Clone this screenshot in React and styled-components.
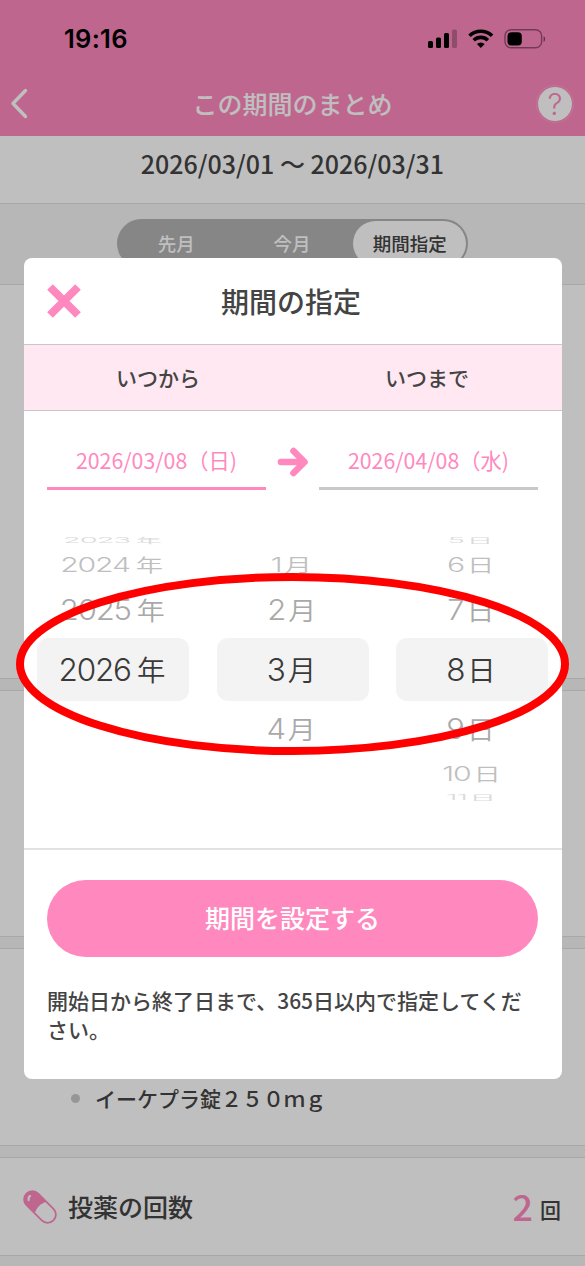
import styled, { createGlobalStyle } from 'styled-components';

const GlobalStyle = createGlobalStyle`
  * {
    box-sizing: border-box;
  }
  body {
    margin: 0;
    background: #fff;
    color: #444;
    font-family: 'Noto Sans CJK JP', sans-serif;
    font-weight: 500;
  }
`;

const Screen = styled.div`
  position: relative;
  display: flex;
  flex-direction: column;
  width: 585px;
  height: 1266px;
  overflow: hidden;
`;

const Top = styled.header`
  flex: none;
  height: 136px;
  background: #ff89bf;
`;

const StatusBar = styled.div`
  display: flex;
  justify-content: space-between;
  align-items: center;
  height: 76px;
  padding: 2px 38px 0 64px;
`;

const Clock = styled.span`
  padding-bottom: 1px;
  font-family: Inter, sans-serif;
  font-size: 25.5px;
  font-weight: 560;
  letter-spacing: 0.3px;
  color: #000;
`;

const NavBar = styled.div`
  display: grid;
  grid-template-columns: 60px 1fr 60px;
  align-items: center;
  height: 56px;
`;

const NavTitle = styled.h1`
  margin: 0;
  padding-bottom: 2px;
  text-align: center;
  font-size: 25px;
  font-weight: 500;
  line-height: 36px;
  color: #fff;
`;

const Help = styled.span`
  justify-self: end;
  display: flex;
  justify-content: center;
  align-items: center;
  width: 34px;
  height: 34px;
  margin-right: 13px;
  border-radius: 50%;
  background: #fff;
  box-shadow: 0 0 0 1px #ff89bf, 0 0 0 2px #ff9dca;
  font-family: Inter, sans-serif;
  font-size: 30px;
  font-weight: 300;
  line-height: 32px;
  color: #ff89bf;
`;

const Period = styled.div`
  flex: none;
  height: 67px;
  padding-top: 9px;
  text-align: center;
  font-size: 25px;
  line-height: 36px;
`;

const TabArea = styled.div`
  display: flex;
  flex: none;
  justify-content: center;
  height: 82px;
  padding-top: 15px;
  background: #f5f5f5;
  border: solid #e0e0e0;
  border-width: 1px 0;
`;

const Segment = styled.div`
  display: grid;
  grid-template-columns: repeat(3, 1fr);
  width: 351px;
  height: 49px;
  padding: 2px;
  border-radius: 25px;
  background: #b3b3b3;
`;

const Tab = styled.span`
  display: flex;
  justify-content: center;
  align-items: center;
  margin-left: ${(p) => (p.$active ? '3px' : '-1px')};
  padding-bottom: 1px;
  border-radius: 23px;
  font-size: 18.5px;
  color: ${(p) => (p.$active ? '#444' : '#fff')};
  background: ${(p) => (p.$active ? '#fff' : 'transparent')};
`;

const Block = styled.section`
  flex: none;
  height: ${(p) => p.$height}px;
`;

const Gap = styled.div`
  flex: none;
  height: 13px;
  background: #f5f5f5;
  border: solid #e0e0e0;
  border-width: 1px 0;
`;

const MedicineBlock = styled(Block)`
  display: flex;
  align-items: flex-end;
  padding: 0 0 31px 71px;
`;

const Medicine = styled.div`
  display: flex;
  align-items: center;
  gap: 15px;
  font-size: 21px;
  line-height: 32px;

  &::before {
    content: '';
    width: 9px;
    height: 9px;
    border-radius: 50%;
    background: #c8c8c8;
  }
`;

const CountRow = styled(Block)`
  display: flex;
  align-items: center;
  padding: 0 24px 0 23px;
`;

const CountLabel = styled.span`
  flex: 1;
  margin-left: 11px;
  padding-bottom: 2px;
  font-size: 25px;
`;

const Count = styled.span`
  display: flex;
  align-items: flex-end;
  gap: 7px;
  padding-bottom: 4px;
  font-size: 21px;
  line-height: 42px;

  strong {
    font-size: 36px;
    font-weight: 500;
    line-height: 50px;
    color: #ff89bf;
  }
`;

const Backdrop = styled.div`
  position: absolute;
  inset: 0;
  padding: 257.5px 23.5px 0;
  background: rgba(0, 0, 0, 0.25);
`;

const Modal = styled.div`
  display: flex;
  flex-direction: column;
  height: 821.5px;
  border-radius: 8px;
  background: #fff;
  overflow: hidden;
`;

const ModalHeader = styled.div`
  display: grid;
  grid-template-columns: 80px 1fr 80px;
  align-items: center;
  height: 86.5px;

  svg {
    margin-left: 23px;
  }
`;

const ModalTitle = styled.h2`
  margin: 0;
  padding: 0 3px 0 0;
  text-align: center;
  font-size: 28px;
  font-weight: 500;
  line-height: 40px;
`;

const Labels = styled.div`
  display: grid;
  grid-template-columns: 1fr 1fr;
  align-items: center;
  height: 67px;
  padding-bottom: 2px;
  border: solid #c8c8c8;
  border-width: 1px 0;
  background: #ffe8f2;
  text-align: center;
  font-size: 21px;
`;

const Dates = styled.div`
  display: flex;
  justify-content: space-between;
  height: 79px;
  padding: 0 23.5px;
`;

const DateField = styled.div`
  width: 219px;
  padding-top: 31px;
  border-bottom: 3px solid ${(p) => (p.$active ? '#ff89bf' : '#c8c8c8')};
  text-align: center;
  font-size: 21.3px;
  font-weight: 400;
  line-height: 36px;
  color: #ff89bf;
`;

const ArrowBox = styled.span`
  padding-top: 36px;
`;

const Picker = styled.div`
  display: grid;
  grid-template-columns: repeat(3, 152px);
  justify-content: space-between;
  height: 358px;
  padding: 44px 13.5px 0;
`;

const Wheel = styled.div`
  display: grid;
  grid-template-rows: 12px 36px 56px 63px 55px 35px 13px;
`;

const rowLooks = {
  0: { color: '#3a3a3a', scale: '1, 1' },
  1: { color: '#a9a9a9', scale: '0.985, 0.89' },
  2: { color: '#bfbfbf', scale: '0.96, 0.63' },
  3: { color: '#dadada', scale: '0.925, 0.24' },
};

const WheelRow = styled.div`
  display: flex;
  justify-content: center;
  align-items: center;
  padding: 0 2px ${(p) => (p.$distance > 1 ? 0 : 1)}px 0;
  border-radius: 11px;
  background: ${(p) => (p.$distance === 0 ? '#f3f3f3' : 'transparent')};
  color: ${(p) => rowLooks[p.$distance].color};

  > span {
    display: flex;
    align-items: baseline;
    gap: ${(p) => p.$gap}px;
    font-family: 'Noto Sans CJK JP', sans-serif;
    font-size: 28.5px;
    font-weight: 350;
    line-height: 40px;
    transform: scale(${(p) => rowLooks[p.$distance].scale});
  }
`;

const Digits = styled.b`
  font-family: Inter, sans-serif;
  font-size: 31.5px;
  font-weight: 350;
  letter-spacing: -1.2px;
`;

const ModalFooter = styled.div`
  flex: 1;
  padding: 30px 23.5px 0;
  border-top: 2px solid #e2e2e2;
`;

const SubmitButton = styled.button`
  display: block;
  width: 100%;
  height: 77px;
  padding: 0 0 3px;
  border: none;
  border-radius: 38.5px;
  background: #ff89bf;
  font-family: inherit;
  font-size: 25px;
  font-weight: 500;
  color: #fff;
`;

const Note = styled.p`
  margin: 29px 0 0;
  font-size: 21px;
  line-height: 29px;
`;

const Marker = styled.svg`
  position: absolute;
  left: 16px;
  top: 573px;
`;

const wheels = [
  { unit: '年', gap: 6, values: ['2023', '2024', '2025', '2026', '', '', ''] },
  { unit: '月', gap: 3, values: ['', '1', '2', '3', '4', '', ''] },
  { unit: '日', gap: 3, values: ['5', '6', '7', '8', '9', '10', '11'] },
];

function StatusIcons() {
  return (
    <svg width="119" height="20" viewBox="0 0 119 20">
      <rect x="0" y="12" width="5" height="7" rx="1.5" />
      <rect x="8" y="8.5" width="5" height="10.5" rx="1.5" />
      <rect x="16" y="4" width="5" height="15" rx="1.5" />
      <rect x="24" y="0.5" width="5" height="18.5" rx="1.5" opacity="0.25" />
      <g fill="none" stroke="#000" strokeWidth="3.6">
        <path d="M41.5 6.8a16.2 16.2 0 0 1 22.6 0" />
        <path d="M45.7 11.3a10.2 10.2 0 0 1 14.2 0" />
      </g>
      <path d="M52.8 19l-3.9-4a5.8 5.8 0 0 1 7.8 0z" />
      <rect
        x="77"
        y="0.8"
        width="36.6"
        height="18"
        rx="6"
        fill="none"
        stroke="#000"
        strokeWidth="1.4"
        opacity="0.42"
      />
      <rect x="79.5" y="3.2" width="14.3" height="13.4" rx="4" />
      <path d="M115.6 7v6c2-1 2-5 0-6z" opacity="0.5" />
    </svg>
  );
}

function PillIcon() {
  return (
    <svg width="34" height="34" viewBox="0 0 35 35">
      <g transform="rotate(45 17.5 17.5)">
        <rect
          x="-2.1"
          y="9"
          width="39.2"
          height="17"
          rx="8.5"
          fill="#fff"
          stroke="#ff89bf"
          strokeWidth="1.9"
        />
        <path
          d="M18.4 9H6.4a8.5 8.5 0 0 0 0 17h12c-3-5-3-12 0-17z"
          fill="#ff89bf"
        />
      </g>
      <path
        d="M5.8 10.4c-.2-2.4 0-3.6 1.5-4.2"
        fill="none"
        stroke="#fff"
        strokeWidth="2.2"
        strokeLinecap="round"
      />
    </svg>
  );
}

function PickerWheel({ unit, gap, values }) {
  return (
    <Wheel>
      {values.map((value, i) => (
        <WheelRow key={i} $distance={Math.abs(i - 3)} $gap={gap}>
          {value && (
            <span>
              <Digits>{value}</Digits>
              {unit}
            </span>
          )}
        </WheelRow>
      ))}
    </Wheel>
  );
}

function PeriodModal() {
  return (
    <Modal>
      <ModalHeader>
        <svg width="34" height="34" viewBox="0 0 34 34">
          <path
            d="M3 3l28 28M31 3L3 31"
            stroke="#ff89bf"
            strokeWidth="8"
          />
        </svg>
        <ModalTitle>期間の指定</ModalTitle>
      </ModalHeader>
      <Labels>
        <span>いつから</span>
        <span>いつまで</span>
      </Labels>
      <Dates>
        <DateField $active>2026/03/08（日)</DateField>
        <ArrowBox>
          <svg width="32" height="30" viewBox="0 0 32 30">
            <path
              d="M4 15h23M16.5 4l11 11-11 11"
              fill="none"
              stroke="#ff89bf"
              strokeWidth="6.6"
              strokeLinecap="round"
              strokeLinejoin="round"
            />
          </svg>
        </ArrowBox>
        <DateField>2026/04/08（水)</DateField>
      </Dates>
      <Picker>
        {wheels.map((wheel) => (
          <PickerWheel key={wheel.unit} {...wheel} />
        ))}
      </Picker>
      <ModalFooter>
        <SubmitButton>期間を設定する</SubmitButton>
        <Note>開始日から終了日まで、365日以内で指定してください。</Note>
      </ModalFooter>
    </Modal>
  );
}

function App() {
  return (
    <Screen>
      <GlobalStyle />
      <Top>
        <StatusBar>
          <Clock>19:16</Clock>
          <StatusIcons />
        </StatusBar>
        <NavBar>
          <svg width="40" height="32" viewBox="0 0 40 32">
            <path
              d="M25.5 2.5L13 15.5l12.5 13"
              fill="none"
              stroke="#fff"
              strokeWidth="3.4"
              strokeLinecap="round"
              strokeLinejoin="round"
            />
          </svg>
          <NavTitle>この期間のまとめ</NavTitle>
          <Help>?</Help>
        </NavBar>
      </Top>
      <Period>2026/03/01 〜 2026/03/31</Period>
      <TabArea>
        <Segment>
          <Tab>先月</Tab>
          <Tab>今月</Tab>
          <Tab $active>期間指定</Tab>
        </Segment>
      </TabArea>
      <Block $height={393} />
      <Gap />
      <Block $height={245} />
      <Gap />
      <MedicineBlock $height={196}>
        <Medicine>イーケプラ錠２５０ｍｇ</Medicine>
      </MedicineBlock>
      <Gap />
      <CountRow $height={97}>
        <PillIcon />
        <CountLabel>投薬の回数</CountLabel>
        <Count>
          <strong>2</strong>回
        </Count>
      </CountRow>
      <Gap />
      <Backdrop>
        <PeriodModal />
      </Backdrop>
      <Marker width="553" height="182" viewBox="0 0 553 182">
        <ellipse
          cx="276.5"
          cy="91"
          rx="272.5"
          ry="87"
          fill="none"
          stroke="#f00"
          strokeWidth="8"
        />
      </Marker>
    </Screen>
  );
}

export default App;
